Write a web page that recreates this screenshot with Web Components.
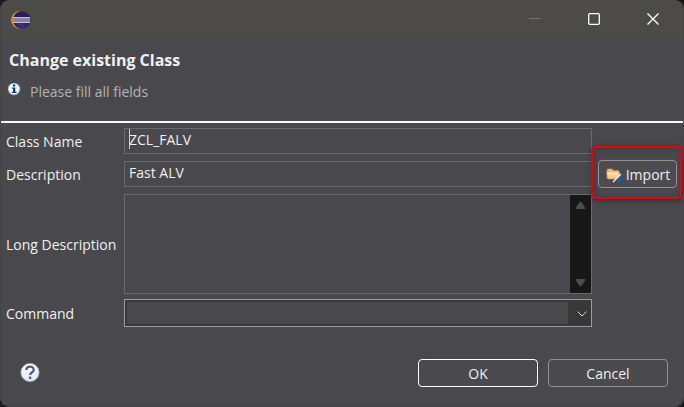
<!DOCTYPE html>
<html lang="en">
<head>
<meta charset="utf-8">
<title>Change existing Class</title>
<style>
html, body { margin: 0; height: 100%; background: #19171a; }
body { font: 14px/20px "Open Sans", "Noto Sans", sans-serif; color: #f0f0f0; }
</style>
</head>
<body>
<app-dialog>
  <title-bar slot="titlebar"></title-bar>
  <dialog-header slot="header" heading="Change existing Class">Please fill all fields</dialog-header>
  <class-form slot="content"></class-form>
  <dialog-footer slot="footer"></dialog-footer>
</app-dialog>
<script>
function define(name, html, setup) {
  const template = document.createElement('template');
  template.innerHTML = '<style>*{box-sizing:border-box}</style>' + html;
  customElements.define(name, class extends HTMLElement {
    constructor() {
      super();
      this.attachShadow({ mode: 'open' }).append(template.content.cloneNode(true));
    }
    connectedCallback() { if (setup) setup(this, this.shadowRoot); }
  });
}

define('app-dialog', `
<style>
:host { display: flex; flex-direction: column; box-sizing: border-box; min-height: 100vh; background: #49484c; border-radius: 9px; overflow: hidden; border: 1px solid #454448; border-top-color: #4c4b48; }
.foot { margin-top: auto; }
</style>
<slot name="titlebar"></slot><slot name="header"></slot><slot name="content"></slot>
<div class="foot"><slot name="footer"></slot></div>`);

define('title-bar', `
<style>
:host { display: flex; align-items: center; justify-content: space-between; height: 37px; background: #4c4b48; padding: 0 1px 0 10px; }
nav { display: flex; height: 100%; }
button { width: 59px; border: 0; padding: 0 0 1px; background: none; display: grid; place-items: center; }
svg { display: block; }
</style>
<svg width="20" height="20" viewBox="0 0 20 20">
  <defs><radialGradient id="g" cx=".5" cy=".8"><stop offset="0" stop-color="#44318a"/><stop offset="1" stop-color="#2b1d58"/></radialGradient></defs>
  <circle cx="9" cy="10" r="9" fill="#d98b2b"/>
  <circle cx="11" cy="10" r="9" fill="#4c4b48"/>
  <circle cx="10.800" cy="10" r="8.700" fill="url(#g)"/>
  <path d="M2 7h17v6H2z" fill="#8c83a8"/>
  <path d="M2 7.500h17M2 12.500h17" stroke="#c3bfcf"/>
  <path d="M2 9.500h17M2 10.500h17" stroke="#8981a5"/>
</svg>
<nav>
  <button aria-label="Minimize" disabled><svg width="12" height="12"><path d="M0 5.500h12" stroke="#747370"/></svg></button>
  <button aria-label="Maximize"><svg width="12" height="12"><rect x=".7" y=".7" width="10.600" height="10.600" rx="1" fill="none" stroke="#fff" stroke-width="1.300"/></svg></button>
  <button aria-label="Close"><svg width="12" height="12"><path d="M.5.5l11 11M11.500.5l-11 11" stroke="#fff" stroke-width="1.300"/></svg></button>
</nav>`);

define('dialog-header', `
<style>
:host { display: block; padding: 10px 8px 19px; border-bottom: 2px solid #fff; border-bottom-color: #f8f8f8; }
h1 { margin: 0 0 10px; font-size: 16px; line-height: 24px; font-weight: 700; }
div { display: flex; align-items: center; gap: 9px; color: #b4b3b3; }
svg { display: block; margin-left: -2px; margin-top: -6px; }
</style>
<h1></h1>
<div><svg width="14" height="14" viewBox="0 0 14 14"><circle cx="7" cy="7" r="6.300" fill="#fff" stroke="#155795"/><path d="M6 2.500h2.300v2H6zM5 5.500h3.300v4.300h1.200v1.300H4.800V9.800H6V6.800H5z" fill="#0b3e74"/></svg><span><slot></slot></span></div>`,
(host, root) => { root.querySelector('h1').textContent = host.getAttribute('heading'); });

define('import-button', `
<style>
:host { display: block; position: relative; }
button { display: flex; align-items: center; justify-content: center; gap: 4px; width: 79px; height: 28px; padding: 1px 0 0 1px; font: inherit; color: inherit; background: #4c4b4f; border: 1px solid #929294; border-radius: 4px; }
.mark { position: absolute; inset: -14px -5px -11px -7px; border: 2px solid #f00005; border-radius: 5px; box-shadow: 1px 1px 5px #2b2a2d, inset 1px 1px 5px #39383b; pointer-events: none; }
</style>
<div class="mark"></div>
<button><svg width="16" height="16" viewBox="0 0 16 16">
  <defs><linearGradient id="f" x2="0" y2="1"><stop stop-color="#ffedb8"/><stop offset="1" stop-color="#f4bd61"/></linearGradient></defs>
  <path d="M1 11.500V3q0-1 1-1h4l1.500 1.500H12q1 0 1 1v7z" fill="#edbd6c" stroke="#c08c47" stroke-width=".7"/>
  <path d="M.7 5h12.600l-.5 7H2z" fill="url(#f)" stroke="#dba553" stroke-width=".5"/>
  <path d="M15.200 7.500v7.700H7.500z" fill="#1e5d91"/><path d="M15 7L7 15" stroke="#eef5fb" stroke-width="1.300"/>
</svg><slot></slot></button>`);

define('text-area', `
<style>
:host { display: flex; height: 100px; margin-top: 1px; box-sizing: border-box; border: 1px solid #6a696c; }
textarea { flex: 1; min-width: 0; border: 0; margin: 0; padding: 1px 4px; resize: none; outline: 0; background: none; color: inherit; font: inherit; }
.bar { width: 21px; background: #171717; display: flex; flex-direction: column; align-items: center; justify-content: space-between; padding: 7px 0; }
</style>
<textarea aria-label="Long Description"></textarea>
<div class="bar"><svg width="9" height="7"><path d="M3.500 0h2L9 5.500V7H0V5.500z" fill="#4d4d4d"/></svg><svg width="9" height="7"><path d="M3.500 7h2L9 1.500V0H0v1.500z" fill="#4d4d4d"/></svg></div>`);

define('class-form', `
<style>
:host { display: grid; grid-template-columns: 113px 1fr auto; column-gap: 5px; row-gap: 5px; align-items: center; padding: 4px 6px 0 5px; }
label { white-space: nowrap; padding-top: 2px; }
input { display: block; width: 100%; height: 26px; margin: 1px 0; padding: 0 4px 3px; border: 1px solid #6a696c; border-radius: 0; outline: 0; background: none; color: inherit; font: inherit; }
.field { position: relative; grid-column: 2; }
.caret { position: absolute; left: 5px; top: 2px; width: 1px; height: 20px; background: #d0d0d0; }
.combo { display: grid; grid-template-columns: 1fr 23px; height: 28px; border: 1px solid #9c9c9c; background: #383838; }
.combo > * { grid-row: 1; }
select { grid-column: 1 / 3; width: 100%; height: 26px; appearance: none; border: 2px solid #383838; border-right-width: 23px; border-radius: 0; background: #49484c; color: inherit; font: inherit; outline: 0; }
.combo svg { grid-column: 2; place-self: center; pointer-events: none; z-index: 1; margin-left: 4px; margin-top: 2px; }
import-button { margin-left: 1px; }
</style>
<label for="name">Class Name</label><div class="field"><input id="name" value="ZCL_FALV"><span class="caret"></span></div><span></span>
<label for="desc">Description</label><div class="field"><input id="desc" value="Fast ALV"></div><import-button>Import</import-button>
<label id="long">Long Description</label><text-area class="area"></text-area><span></span>
<label for="cmd">Command</label><div class="combo"><select id="cmd"><option value=""></option></select><svg width="10" height="6"><path d="M.5.5L5 5 9.500.5" fill="none" stroke="#d5d5d5" stroke-width="1"/></svg></div><span></span>`,
(host, root) => {
  root.querySelector('#long').onclick = () => root.querySelector('text-area').shadowRoot.querySelector('textarea').focus();
});

define('dialog-footer', `
<style>
:host { display: flex; align-items: center; gap: 10px; padding: 0 15px 19px 19px; }
button { width: 120px; height: 28px; padding: 2px 0 0; border: 1px solid #929294; border-radius: 4px; background: #4a494d; color: inherit; font: inherit; }
.ok { border-color: #fff; }
.help { width: 20px; height: 20px; padding: 0; border: 0; background: none; margin-right: auto; position: relative; }
svg { display: block; }
</style>
<button class="help" aria-label="Help"><svg width="20" height="20" viewBox="0 0 20 20">
  <defs><linearGradient id="h" x2="0" y2="1"><stop stop-color="#fff"/><stop offset="1" stop-color="#e6e6e6"/></linearGradient></defs>
  <circle cx="10" cy="9.500" r="9.200" fill="url(#h)" stroke="#8797ae" stroke-width=".8"/>
  <path d="M6.300 7C6.400 2.500 13.700 2.500 13.700 6.700c0 2.800-3.600 2.800-3.600 5.300" fill="none" stroke="#495f85" stroke-width="2.300"/><circle cx="10.100" cy="14.800" r="1.400" fill="#495f85"/>
</svg></button>
<button class="ok">OK</button><button>Cancel</button>`);
</script>
</body>
</html>
